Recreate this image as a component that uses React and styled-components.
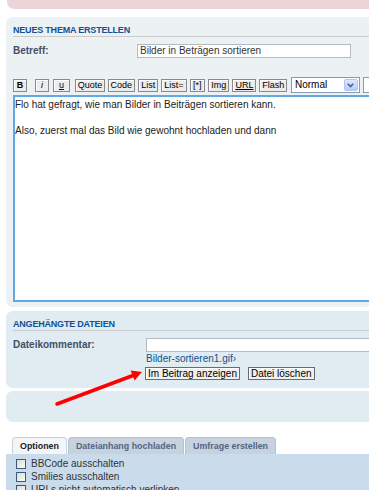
import React from 'react';
import styled, { createGlobalStyle } from 'styled-components';

const Global = createGlobalStyle`
  html, body { margin: 0; padding: 0; background: #ffffff; overflow: hidden; }
  body { font-family: "Liberation Sans", Arial, sans-serif; }
  * { box-sizing: border-box; }
`;

const Page = styled.div`
  position: relative;
  width: 430px;
  height: 490px;
  padding-left: 6px;
  overflow: hidden;
`;

const RulesStrip = styled.div`
  margin-left: 1px;
  height: 9px;
  background: #ecd5d8;
  border-radius: 0 0 0 7px;
`;

const Panel = styled.div`
  background: ${p => p.$bg};
  border-radius: 7px;
  margin-top: ${p => p.$mt}px;
  padding: ${p => p.$pt ?? 8}px 7px ${p => p.$pb}px 7px;
  min-height: ${p => p.$h ?? 0}px;
`;

const Heading = styled.h3`
  margin: 0;
  font: bold 9px/10px "Liberation Sans", Arial, sans-serif;
  letter-spacing: -0.2px;
  text-transform: uppercase;
  color: #115098;
  padding-bottom: 1px;
  border-bottom: 1px solid #cccccc;
`;

const FieldRow = styled.div`
  display: flex;
  align-items: center;
  margin-top: ${p => p.$mt}px;
`;

const Label = styled.label`
  width: ${p => p.$w}px;
  flex: none;
  font: bold 10px/12px "Liberation Sans", Arial, sans-serif;
  color: #425067;
`;

const TextInput = styled.div`
  width: ${p => p.$w}px;
  height: 14px;
  flex: none;
  border: 1px solid #b4bac0;
  background: #ffffff;
  font: 10px/12px "Liberation Sans", Arial, sans-serif;
  color: #333333;
  padding: 0 2px;
  white-space: nowrap;
`;

const Toolbar = styled.div`
  display: flex;
  align-items: center;
  gap: 3px;
  margin-top: 19px;
`;

const ToolButton = styled.span`
  display: inline-flex;
  align-items: center;
  justify-content: center;
  height: 13px;
  min-width: ${p => p.$w ?? 0}px;
  padding: 0 3px;
  margin-right: ${p => p.$mr ?? 0}px;
  border: 1px solid #8a8a8a;
  background: #ececec;
  box-shadow: inset 1px 1px 0 #ffffff;
  font: ${p => (p.$bold ? 'bold ' : '')}${p => (p.$italic ? 'italic ' : '')}9px/11px "Liberation Sans", Arial, sans-serif;
  text-decoration: ${p => (p.$under ? 'underline' : 'none')};
  color: #000000;
  white-space: nowrap;
`;

const FakeSelect = styled.div`
  display: flex;
  align-items: center;
  justify-content: space-between;
  width: ${p => p.$w}px;
  height: 16px;
  flex: none;
  margin-left: ${p => p.$ml ?? 0}px;
  border: 1px solid #7f9db9;
  background: #ffffff;
  padding: 0 1px 0 3px;
  font: 10px/12px "Liberation Sans", Arial, sans-serif;
  color: #000000;
`;

const SelectArrow = styled.span`
  display: flex;
  align-items: center;
  justify-content: center;
  width: 14px;
  height: 12px;
  border-radius: 2px;
  background: linear-gradient(#dde8fd, #b7cbf7);
  border: 1px solid #b5c7ee;
`;

const TextArea = styled.textarea`
  display: block;
  width: 400px;
  height: 207px;
  margin-top: 2px;
  border: 2px solid #62a9e2;
  background: #ffffff;
  padding: 1px 0;
  font: 10px/13px "Liberation Sans", Arial, sans-serif;
  color: #222222;
  resize: none;
  overflow: hidden;
  outline: none;
`;

const FileLink = styled.a`
  display: block;
  margin: 2px 0 0 133px;
  font: 10px/10px "Liberation Sans", Arial, sans-serif;
  color: #105289;
  text-decoration: none;
`;

const ButtonRow = styled.div`
  display: flex;
  gap: 8px;
  margin: 3px 0 0 132px;
`;

const FormButton = styled.span`
  display: inline-flex;
  align-items: center;
  height: 13px;
  padding: 0 2px;
  border: 1px solid #6b6b6b;
  background: #f0f0f0;
  box-shadow: inset 1px 1px 0 #ffffff;
  font: 10px/11px "Liberation Sans", Arial, sans-serif;
  color: #000000;
  white-space: nowrap;
`;

const Tabs = styled.div`
  display: flex;
  gap: 1px;
  margin: 15px 0 0 6px;
`;

const Tab = styled.span`
  display: inline-flex;
  align-items: center;
  height: 17px;
  padding: 0 7px;
  border: 1px solid ${p => (p.$active ? '#c6d3de' : '#b3c2cf')};
  border-bottom: none;
  border-radius: 4px 4px 0 0;
  background: ${p => (p.$active ? '#f3f5f7' : '#c6d3de')};
  font: bold 8.9px/11px "Liberation Sans", Arial, sans-serif;
  color: ${p => (p.$active ? '#222222' : '#536482')};
  white-space: nowrap;
`;

const TabPanel = styled.div`
  background: #cadceb;
  padding: 3px 10px 20px 10px;
`;

const CheckRow = styled.div`
  display: flex;
  align-items: center;
  height: 13px;
  font: 10px/13px "Liberation Sans", Arial, sans-serif;
  color: #333333;
`;

const CheckBox = styled.span`
  display: inline-block;
  width: 10px;
  height: 10px;
  margin-right: 5px;
  border: 1px solid #3b5a7a;
  background: linear-gradient(135deg, #dcdcd6, #fbfbf8);
`;

const ArrowOverlay = styled.svg`
  position: absolute;
  left: 0;
  top: 0;
  pointer-events: none;
`;

const toolButtons = [
  { t: 'B', bold: true, w: 14, mr: 5 },
  { t: 'i', italic: true, w: 14, mr: 1 },
  { t: 'u', under: true, w: 17, mr: 2 },
  { t: 'Quote' },
  { t: 'Code' },
  { t: 'List' },
  { t: 'List=' },
  { t: '[*]' },
  { t: 'Img' },
  { t: 'URL', under: true },
  { t: 'Flash' },
];

const Chevron = () => (
  <svg width="7" height="5" viewBox="0 0 7 5">
    <path d="M0.8 0.8 L3.5 3.6 L6.2 0.8" fill="none" stroke="#4d6185" strokeWidth="1.6" />
  </svg>
);

export default function App() {
  return (
    <>
      <Global />
      <Page>
        <RulesStrip />

        <Panel $bg="#ecf1f3" $mt={8} $pb={5}>
          <Heading>Neues Thema erstellen</Heading>
          <FieldRow $mt={7}>
            <Label $w={124}>Betreff:</Label>
            <TextInput $w={214}>Bilder in Beträgen sortieren</TextInput>
          </FieldRow>
          <Toolbar>
            {toolButtons.map(b => (
              <ToolButton
                key={b.t}
                $bold={b.bold}
                $italic={b.italic}
                $under={b.under}
                $w={b.w}
                $mr={b.mr}
              >
                {b.t}
              </ToolButton>
            ))}
            <FakeSelect $w={69} $ml={1}>
              Normal
              <SelectArrow><Chevron /></SelectArrow>
            </FakeSelect>
            <FakeSelect $w={60} />
          </Toolbar>
          <TextArea
            readOnly
            defaultValue={'Flo hat gefragt, wie man Bilder in Beiträgen sortieren kann.\n\nAlso, zuerst mal das Bild wie gewohnt hochladen und dann'}
          />
        </Panel>

        <Panel $bg="#e1ebf2" $mt={4} $pb={8}>
          <Heading>Angehängte Dateien</Heading>
          <FieldRow $mt={7}>
            <Label $w={133}>Dateikommentar:</Label>
            <TextInput $w={260} />
          </FieldRow>
          <FileLink href="#">Bilder-sortieren1.gif›</FileLink>
          <ButtonRow>
            <FormButton>Im Beitrag anzeigen</FormButton>
            <FormButton>Datei löschen</FormButton>
          </ButtonRow>
        </Panel>

        <Panel $bg="#e1ebf2" $mt={3} $pb={0} $pt={0} $h={31} />

        <Tabs>
          <Tab $active>Optionen</Tab>
          <Tab>Dateianhang hochladen</Tab>
          <Tab>Umfrage erstellen</Tab>
        </Tabs>
        <TabPanel>
          <CheckRow><CheckBox />BBCode ausschalten</CheckRow>
          <CheckRow><CheckBox />Smilies ausschalten</CheckRow>
          <CheckRow><CheckBox />URLs nicht automatisch verlinken</CheckRow>
        </TabPanel>

        <ArrowOverlay width="369" height="490" viewBox="0 0 369 490">
          <line x1="57" y1="404" x2="133" y2="375.5" stroke="#ff0000" strokeWidth="3.5" strokeLinecap="round" />
          <polygon points="142,372 134.6,380.6 130.6,370.4" fill="#ff0000" />
        </ArrowOverlay>
      </Page>
    </>
  );
}
